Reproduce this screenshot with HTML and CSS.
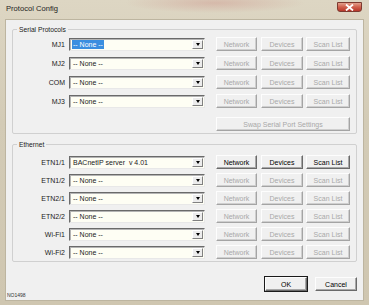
FILE: index.html
```html
<!DOCTYPE html>
<html lang="en">
<head>
    <meta charset="UTF-8">
    <title>Protocol Config</title>
    <link rel="stylesheet" href="styles.css">
</head>
<body>
    <div class="window">
        <div class="titlebar">
            <span class="title">Protocol Config</span>
            <span class="close">
                <svg width="9" height="7" viewBox="0 0 9 7"><path d="M1 0.5 L8 6.5 M8 0.5 L1 6.5" stroke="#fff" stroke-width="1.8"/></svg>
            </span>
        </div>
        <div class="client">
            <div class="group serial">
                <span class="legend">Serial Protocols</span>
                <div class="row">
                    <span class="label">MJ1</span>
                    <div class="combo"><span class="value selected">-- None --</span><span class="arrow"></span></div>
                    <span class="btn off net">Network</span>
                    <span class="btn off dev">Devices</span>
                    <span class="btn off scan">Scan List</span>
                </div>
                <div class="row">
                    <span class="label">MJ2</span>
                    <div class="combo"><span class="value">-- None --</span><span class="arrow"></span></div>
                    <span class="btn off net">Network</span>
                    <span class="btn off dev">Devices</span>
                    <span class="btn off scan">Scan List</span>
                </div>
                <div class="row">
                    <span class="label">COM</span>
                    <div class="combo"><span class="value">-- None --</span><span class="arrow"></span></div>
                    <span class="btn off net">Network</span>
                    <span class="btn off dev">Devices</span>
                    <span class="btn off scan">Scan List</span>
                </div>
                <div class="row">
                    <span class="label">MJ3</span>
                    <div class="combo"><span class="value">-- None --</span><span class="arrow"></span></div>
                    <span class="btn off net">Network</span>
                    <span class="btn off dev">Devices</span>
                    <span class="btn off scan">Scan List</span>
                </div>
                <div class="swap-row">
                    <span class="btn off swap">Swap Serial Port Settings</span>
                </div>
            </div>

            <div class="group ethernet">
                <span class="legend">Ethernet</span>
                <div class="row">
                    <span class="label">ETN1/1</span>
                    <div class="combo"><span class="value">BACnetIP server&nbsp; v 4.01</span><span class="arrow"></span></div>
                    <span class="btn net">Network</span>
                    <span class="btn dev">Devices</span>
                    <span class="btn scan">Scan List</span>
                </div>
                <div class="row">
                    <span class="label">ETN1/2</span>
                    <div class="combo"><span class="value">-- None --</span><span class="arrow"></span></div>
                    <span class="btn off net">Network</span>
                    <span class="btn off dev">Devices</span>
                    <span class="btn off scan">Scan List</span>
                </div>
                <div class="row">
                    <span class="label">ETN2/1</span>
                    <div class="combo"><span class="value">-- None --</span><span class="arrow"></span></div>
                    <span class="btn off net">Network</span>
                    <span class="btn off dev">Devices</span>
                    <span class="btn off scan">Scan List</span>
                </div>
                <div class="row">
                    <span class="label">ETN2/2</span>
                    <div class="combo"><span class="value">-- None --</span><span class="arrow"></span></div>
                    <span class="btn off net">Network</span>
                    <span class="btn off dev">Devices</span>
                    <span class="btn off scan">Scan List</span>
                </div>
                <div class="row">
                    <span class="label">Wi-Fi1</span>
                    <div class="combo"><span class="value">-- None --</span><span class="arrow"></span></div>
                    <span class="btn off net">Network</span>
                    <span class="btn off dev">Devices</span>
                    <span class="btn off scan">Scan List</span>
                </div>
                <div class="row">
                    <span class="label">Wi-Fi2</span>
                    <div class="combo"><span class="value">-- None --</span><span class="arrow"></span></div>
                    <span class="btn off net">Network</span>
                    <span class="btn off dev">Devices</span>
                    <span class="btn off scan">Scan List</span>
                </div>
            </div>

            <div class="footer">
                <span class="btn action default">OK</span>
                <span class="btn action">Cancel</span>
            </div>
            <div class="status">NO1498</div>
        </div>
    </div>
</body>
</html>
```

FILE: styles.css
```css
body {
    margin: 0;
    font-family: "Liberation Sans", Arial, sans-serif;
    font-size: 7px;
    color: #1a1a1a;
    background: #d6cfbc;
}
.window {
    width: 369px;
    height: 305px;
    display: flex;
    flex-direction: column;
    background:
        radial-gradient(ellipse 90px 10px at 215px 3px, rgba(205, 150, 140, 0.45), transparent),
        linear-gradient(180deg, #ddd6c3 0%, #d3cbb6 40%, #cfc6b0 100%);
}
.titlebar {
    height: 20px;
    display: flex;
    align-items: flex-start;
    justify-content: space-between;
    flex-shrink: 0;
}
.title {
    margin: 4px 0 0 6px;
    font-size: 7.6px;
    color: #1e1e1e;
}
.close {
    width: 25px;
    height: 10px;
    margin: 2px 7px 0 0;
    border: 1px solid #7d3a30;
    border-radius: 0 0 3px 3px;
    background: linear-gradient(180deg, #e2a08c 0%, #d0604c 50%, #b8382a 100%);
    display: flex;
    align-items: center;
    justify-content: center;
    box-sizing: border-box;
}
.client {
    height: 280px;
    margin: 0 6px;
    background: #f0f0f0;
    box-shadow: 0 0 0 1px #bdb5a0;
    display: flex;
    flex-direction: column;
}
.group {
    position: relative;
    width: 345px;
    margin-left: 6px;
    border: 1px solid #d0d0d0;
    border-radius: 2px;
    box-sizing: border-box;
    display: flex;
    flex-direction: column;
}
.serial {
    margin-top: 9px;
    padding: 7px 0 2px;
    gap: 5px;
}
.ethernet {
    margin-top: 10px;
    padding: 10px 0 2px;
    gap: 4px;
}
.legend {
    position: absolute;
    top: -5px;
    left: 4px;
    padding: 0 2px;
    background: #f0f0f0;
    font-size: 6.7px;
    line-height: 9px;
}
.row {
    display: flex;
    align-items: center;
    height: 14px;
}
.label {
    width: 52px;
    text-align: right;
    margin-right: 4px;
    color: #222;
}
.combo {
    width: 136px;
    height: 13px;
    box-sizing: border-box;
    border: 1px solid;
    border-color: #6a6a6a #e8e8e8 #e8e8e8 #6a6a6a;
    box-shadow: inset 1px 1px 0 #b4b4b4;
    background: #fefef4;
    display: flex;
    align-items: center;
    justify-content: space-between;
    padding-left: 2px;
}
.value {
    line-height: 9px;
    padding: 0 1px;
    white-space: nowrap;
}
.selected {
    background: #3a8ee0;
    color: #fff;
}
.arrow {
    width: 11px;
    height: 9px;
    margin-right: 1px;
    box-sizing: border-box;
    border: 1px solid;
    border-color: #fff #808080 #808080 #fff;
    background: #ececec;
    display: flex;
    align-items: center;
    justify-content: center;
}
.arrow::after {
    content: "";
    border-left: 2.5px solid transparent;
    border-right: 2.5px solid transparent;
    border-top: 3px solid #000;
}
.btn {
    height: 14px;
    box-sizing: border-box;
    border: 1px solid;
    border-color: #fdfdfd #6a6a6a #6a6a6a #fdfdfd;
    box-shadow: inset -1px -1px 0 #a8a8a8;
    background: #f0f0f0;
    display: flex;
    align-items: center;
    justify-content: center;
    white-space: nowrap;
    color: #000;
}
.btn.off {
    color: #a8a8a8;
    border-color: #fdfdfd #a4a4a4 #a4a4a4 #fdfdfd;
    box-shadow: inset -1px -1px 0 #cfcfcf;
}
.net {
    width: 41px;
    margin-left: 11px;
}
.dev {
    width: 42px;
    margin-left: 4px;
}
.scan {
    width: 44px;
    margin-left: 3px;
}
.swap-row {
    display: flex;
    margin-top: 4px;
}
.swap {
    width: 134px;
    margin-left: 203px;
}
.footer {
    display: flex;
    justify-content: flex-end;
    gap: 8px;
    margin: 15px 6px 0 0;
}
.action {
    width: 42px;
    height: 14px;
}
.default {
    outline: 1px solid #1a1a1a;
    outline-offset: 0;
}
.status {
    margin: 1px 0 0 1px;
    font-size: 5px;
    line-height: 6px;
    color: #333;
}
```
